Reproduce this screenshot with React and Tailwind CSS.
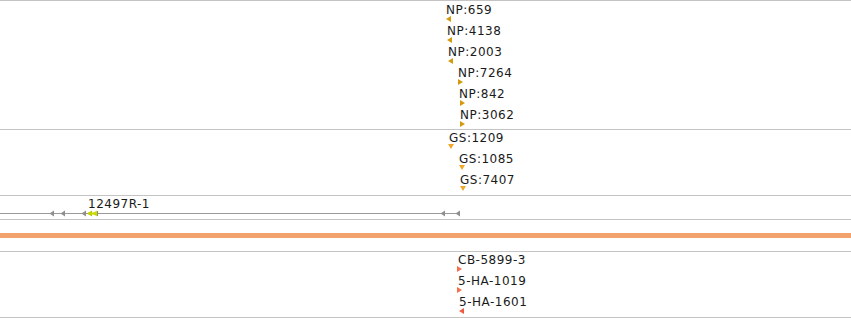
const font = { fontFamily: '"DejaVu Sans", Verdana, sans-serif' }

// glyph for a feature marker, drawn in a 5x6 box
function Marker({ dir, color, x, y }) {
  const pts = {
    left: "5,0 5,6 0,3",
    right: "0,0 0,6 5,3",
    down: "0,0 6,0 3,5",
  }[dir]
  return (
    <svg
      className="absolute"
      style={{ left: x, top: y }}
      width="6"
      height="6"
      viewBox="0 0 6 6"
    >
      <polygon points={pts} fill={color} />
    </svg>
  )
}

function Feature({ label, x, y, dir, color, mx, my }) {
  return (
    <>
      <span
        className="absolute whitespace-nowrap text-[12px] leading-[12px] tracking-[0.5px] text-[#1a1a1a]"
        style={{ left: x, top: y }}
      >
        {label}
      </span>
      <Marker dir={dir} color={color} x={mx ?? x} y={my ?? y + 12} />
    </>
  )
}

const np = [
  { label: "NP:659", x: 446, y: 3, dir: "left", mx: 446 },
  { label: "NP:4138", x: 447, y: 24, dir: "left", mx: 447 },
  { label: "NP:2003", x: 448, y: 45, dir: "left", mx: 448 },
  { label: "NP:7264", x: 458, y: 66, dir: "right", mx: 458 },
  { label: "NP:842", x: 459, y: 87, dir: "right", mx: 460 },
  { label: "NP:3062", x: 460, y: 108, dir: "right", mx: 460 },
]

const gs = [
  { label: "GS:1209", x: 449, y: 2, mx: 448 },
  { label: "GS:1085", x: 459, y: 23, mx: 459 },
  { label: "GS:7407", x: 460, y: 44, mx: 460 },
]

const cb = [
  { label: "CB-5899-3", x: 458, y: 2, dir: "right", mx: 457 },
  { label: "5-HA-1019", x: 458, y: 23, dir: "right", mx: 457 },
  { label: "5-HA-1601", x: 459, y: 44, dir: "left", mx: 459 },
]

export default function App() {
  return (
    <div
      className="flex flex-col w-[851px] h-[318px] bg-white overflow-hidden border-t border-[#c4c4c4]"
      style={font}
    >
      {/* NP track */}
      <div className="relative h-[129px] shrink-0 border-b border-[#c4c4c4]">
        {np.map((f) => (
          <Feature key={f.label} {...f} color="#d39a0c" />
        ))}
      </div>

      {/* GS track */}
      <div className="relative h-[66px] shrink-0 border-b border-[#c4c4c4]">
        {gs.map((f) => (
          <Feature key={f.label} {...f} dir="down" color="#f2a72a" />
        ))}
      </div>

      {/* transcript track */}
      <div className="relative h-[24px] shrink-0 border-b border-[#c4c4c4]">
        <span
          className="absolute whitespace-nowrap text-[12px] leading-[12px] tracking-[0.5px] text-[#1a1a1a]"
          style={{ left: 88, top: 2 }}
        >
          12497R-1
        </span>
        <svg className="absolute left-0 top-[14px]" width="470" height="8" viewBox="0 0 470 8">
          <line x1="0" y1="3.5" x2="460" y2="3.5" stroke="#9a9a9a" strokeWidth="1" />
          <polygon points="54,0.5 54,6.5 49.5,3.5" fill="#8f8f8f" />
          <polygon points="65,0.5 65,6.5 60.5,3.5" fill="#8f8f8f" />
          <polygon points="86,0.5 86,6.5 81.5,3.5" fill="#8f8f8f" />
          <polygon points="92,0.5 92,6.5 87,3.5" fill="#b5c900" />
          <polygon points="97,0.5 97,6.5 92,3.5" fill="#d4e200" />
          <rect x="88" y="2.5" width="9" height="2" fill="#c8d800" />
          <rect x="97" y="1" width="1" height="5" fill="#8f8f8f" />
          <polygon points="445,0.5 445,6.5 440.5,3.5" fill="#8f8f8f" />
          <polygon points="460,0.5 460,6.5 455.5,3.5" fill="#8f8f8f" />
        </svg>
      </div>

      {/* sequence ruler */}
      <div className="flex flex-col h-[32px] shrink-0 border-b border-[#c4c4c4] pt-[13px]">
        <div className="h-[5px] bg-[#f2a26d]" />
      </div>

      {/* CB track */}
      <div className="relative h-[66px] shrink-0 border-b border-[#c4c4c4]">
        {cb.map((f) => (
          <Feature key={f.label} {...f} color={f.dir === "left" ? "#f05a45" : "#f4704f"} />
        ))}
      </div>
    </div>
  )
}
